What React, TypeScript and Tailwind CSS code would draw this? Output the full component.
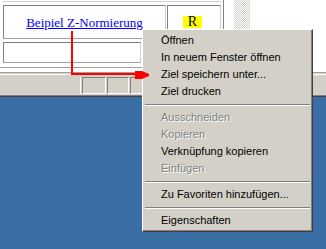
import React from "react";

type Item = { label: string; disabled?: boolean } | "sep";

const MENU: Item[] = [
  { label: "Öffnen" },
  { label: "In neuem Fenster öffnen" },
  { label: "Ziel speichern unter..." },
  { label: "Ziel drucken" },
  "sep",
  { label: "Ausschneiden", disabled: true },
  { label: "Kopieren", disabled: true },
  { label: "Verknüpfung kopieren" },
  { label: "Einfügen", disabled: true },
  "sep",
  { label: "Zu Favoriten hinzufügen..." },
  "sep",
  { label: "Eigenschaften" },
];

const cell =
  "border border-t-[#808080] border-l-[#808080] border-b-[#a0a0a0] border-r-[#d4d0c8]";
const pane = "border border-t-[#808080] border-l-[#808080] border-b-white border-r-white";

function ContextMenu() {
  return (
    <div className="absolute left-[142px] top-[29px] w-[171px] h-[203px] bg-[#d4d0c8] border border-t-white border-l-white border-r-[#404040] border-b-[#404040] shadow-[inset_-1px_-1px_0_#808080] p-[2px] font-['Liberation_Sans',Arial,sans-serif] text-[11px]">
      {MENU.map((item, i) =>
        item === "sep" ? (
          <div key={i} className="h-[9px] pt-[4px]">
            <div className="h-[1px] bg-[#808080]" />
            <div className="h-[1px] bg-white" />
          </div>
        ) : (
          <div
            key={i}
            className={
              item.disabled
                ? "h-[17px] leading-[17px] pl-[16px] text-[#808080] [text-shadow:1px_1px_0_#fff]"
                : "h-[17px] leading-[17px] pl-[16px] text-black"
            }
          >
            {item.label}
          </div>
        )
      )}
    </div>
  );
}

export default function App() {
  return (
    <div className="relative w-[326px] h-[249px] overflow-hidden bg-[#3a6ea5]">
      <div className="h-[72px] bg-white flex">
        <div className="w-[224px] pl-[3px] border-r border-[#808080]">
          <div className="flex gap-[1px] h-[2px]">
            <div className="w-[163px] border-b border-[#d4d0c8]" />
            <div className="w-[54px] border-b border-[#d4d0c8]" />
          </div>
          <div className="mt-[3px] flex gap-[1px]">
            <div className={`w-[163px] h-[34px] flex items-center justify-center ${cell}`}>
              <a className="font-['Liberation_Serif','Times_New_Roman',serif] text-[13px] leading-none text-[#0000ff] underline cursor-pointer">
                Beipiel Z-Normierung
              </a>
            </div>
            <div className={`w-[54px] h-[34px] flex items-center justify-center pr-[3px] ${cell}`}>
              <span className="w-[19px] h-[12px] bg-[#ffff00] flex items-center justify-center font-['Liberation_Serif','DejaVu_Serif',serif] text-[14px] leading-[12px] text-black">
                R
              </span>
            </div>
          </div>
          <div className="mt-[3px] flex gap-[1px]">
            <div className={`w-[138px] h-[21px] ${cell}`} />
            <div className={`w-[79px] h-[21px] ${cell}`} />
          </div>
          <div className="mt-[4px] h-[1px] bg-[#a0a0a0] -ml-[3px]" />
        </div>
        <div className="w-[10px]" />
        <div className="w-[16px] bg-[repeating-conic-gradient(#d4d0c8_0%_25%,#ffffff_0%_50%)] bg-[length:2px_2px]" />
        <div className="flex-1" />
      </div>
      <div className="h-[1px] bg-[#a0a0a0]" />
      <div className="h-[1px] bg-[#d4d0c8]" />
      <div className="h-[1px] bg-white" />
      <div className="h-[20px] bg-[#d4d0c8] flex gap-[1px] pt-[2px] pb-[1px]">
        <div className="w-[81px] border-r border-white" />
        <div className={`w-[24px] ${pane}`} />
        <div className={`w-[22px] ${pane}`} />
        <div className={`w-[60px] ${pane}`} />
      </div>
      <div className="h-[1px] bg-[#808080]" />
      <div className="h-[1px] bg-[#404040]" />

      <ContextMenu />

      <svg className="absolute left-0 top-0 pointer-events-none" width="326" height="249">
        <path d="M72 31 V74 H137" fill="none" stroke="#ff0000" strokeWidth="2" />
        <path d="M135 71 H142 L149 74 V76 L142 79 H135 Z" fill="#ff0000" />
      </svg>
    </div>
  );
}
